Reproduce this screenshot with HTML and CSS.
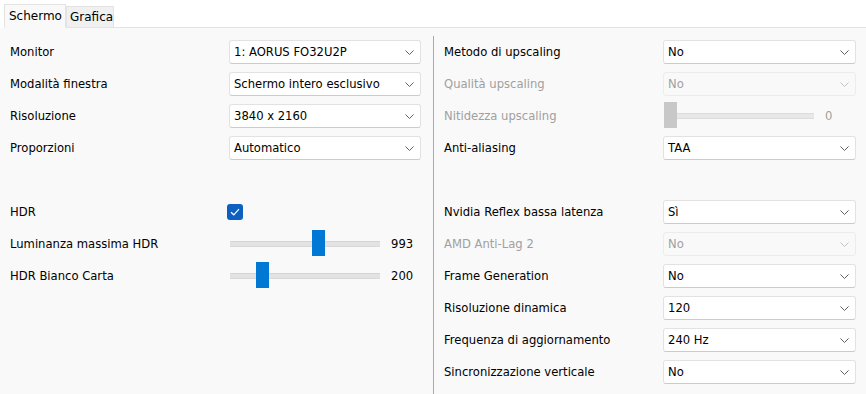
FILE: index.html
```html
<!DOCTYPE html>
<html lang="it">
<head>
<meta charset="utf-8">
<title>Impostazioni</title>
<link rel="stylesheet" href="styles.css">
</head>
<body>
<div class="tabbar">
  <div class="tab active">Schermo</div>
  <div class="tab">Grafica</div>
  <div class="tabfill"></div>
</div>
<div class="panel">
  <div class="col left">
    <div class="lbl">Monitor</div>
    <div class="combo"><span>1: AORUS FO32U2P</span><svg class="chev" width="9" height="5" viewBox="0 0 9 5"><polyline points="0.5,0.5 4.5,4.5 8.5,0.5"/></svg></div>
    <div class="lbl">Modalità finestra</div>
    <div class="combo"><span>Schermo intero esclusivo</span><svg class="chev" width="9" height="5" viewBox="0 0 9 5"><polyline points="0.5,0.5 4.5,4.5 8.5,0.5"/></svg></div>
    <div class="lbl">Risoluzione</div>
    <div class="combo"><span>3840 x 2160</span><svg class="chev" width="9" height="5" viewBox="0 0 9 5"><polyline points="0.5,0.5 4.5,4.5 8.5,0.5"/></svg></div>
    <div class="lbl">Proporzioni</div>
    <div class="combo"><span>Automatico</span><svg class="chev" width="9" height="5" viewBox="0 0 9 5"><polyline points="0.5,0.5 4.5,4.5 8.5,0.5"/></svg></div>
    <div class="spacer"></div>
    <div class="lbl">HDR</div>
    <div class="cell"><div class="check"><svg width="10" height="8" viewBox="0 0 10 8"><polyline points="1,4.2 3.8,6.8 9,1.2"/></svg></div></div>
    <div class="lbl">Luminanza massima HDR</div>
    <div class="cell slider-row"><div class="track"><div class="handle" style="left:82px"></div></div><span class="val">993</span></div>
    <div class="lbl">HDR Bianco Carta</div>
    <div class="cell slider-row"><div class="track"><div class="handle" style="left:26px"></div></div><span class="val">200</span></div>
  </div>
  <div class="sep"></div>
  <div class="col right">
    <div class="lbl">Metodo di upscaling</div>
    <div class="combo"><span>No</span><svg class="chev" width="9" height="5" viewBox="0 0 9 5"><polyline points="0.5,0.5 4.5,4.5 8.5,0.5"/></svg></div>
    <div class="lbl dis">Qualità upscaling</div>
    <div class="combo disabled"><span>No</span><svg class="chev" width="9" height="5" viewBox="0 0 9 5"><polyline points="0.5,0.5 4.5,4.5 8.5,0.5"/></svg></div>
    <div class="lbl dis">Nitidezza upscaling</div>
    <div class="cell slider-row wide"><div class="track dis"><div class="handle dis" style="left:0px"></div></div><span class="val dis">0</span></div>
    <div class="lbl">Anti-aliasing</div>
    <div class="combo"><span>TAA</span><svg class="chev" width="9" height="5" viewBox="0 0 9 5"><polyline points="0.5,0.5 4.5,4.5 8.5,0.5"/></svg></div>
    <div class="spacer"></div>
    <div class="lbl">Nvidia Reflex bassa latenza</div>
    <div class="combo"><span>Sì</span><svg class="chev" width="9" height="5" viewBox="0 0 9 5"><polyline points="0.5,0.5 4.5,4.5 8.5,0.5"/></svg></div>
    <div class="lbl dis">AMD Anti-Lag 2</div>
    <div class="combo disabled"><span>No</span><svg class="chev" width="9" height="5" viewBox="0 0 9 5"><polyline points="0.5,0.5 4.5,4.5 8.5,0.5"/></svg></div>
    <div class="lbl">Frame Generation</div>
    <div class="combo"><span>No</span><svg class="chev" width="9" height="5" viewBox="0 0 9 5"><polyline points="0.5,0.5 4.5,4.5 8.5,0.5"/></svg></div>
    <div class="lbl">Risoluzione dinamica</div>
    <div class="combo"><span>120</span><svg class="chev" width="9" height="5" viewBox="0 0 9 5"><polyline points="0.5,0.5 4.5,4.5 8.5,0.5"/></svg></div>
    <div class="lbl">Frequenza di aggiornamento</div>
    <div class="combo"><span>240 Hz</span><svg class="chev" width="9" height="5" viewBox="0 0 9 5"><polyline points="0.5,0.5 4.5,4.5 8.5,0.5"/></svg></div>
    <div class="lbl">Sincronizzazione verticale</div>
    <div class="combo"><span>No</span><svg class="chev" width="9" height="5" viewBox="0 0 9 5"><polyline points="0.5,0.5 4.5,4.5 8.5,0.5"/></svg></div>
  </div>
</div>
</body>
</html>
```
FILE: styles.css
```css
html, body {
  margin: 0;
  padding: 0;
  width: 866px;
  height: 394px;
  overflow: hidden;
  background: #f9f9f9;
  font-family: "DejaVu Sans", Tahoma, sans-serif;
  font-size: 11.6px;
  color: #000;
}

.tabbar {
  display: flex;
  align-items: flex-end;
  height: 28px;
  background: #ffffff;
  padding-left: 4px;
  box-sizing: border-box;
}

.tab {
  height: 22px;
  padding: 0 3px;
  line-height: 21px;
  background: #f0f0f0;
  border: 1px solid #e3e3e3;
  border-bottom: 1px solid #e3e3e3;
  box-sizing: border-box;
  font-size: 12px;
  width: 48px;
}

.tab.active {
  height: 24px;
  background: #f9f9f9;
  border-bottom-color: #f9f9f9;
  line-height: 22px;
  padding: 0 4px;
  width: 62px;
}

.tabfill {
  flex: 1;
  height: 1px;
  background: #e3e3e3;
}

.panel {
  display: flex;
  padding-top: 8px;
  height: 366px;
  box-sizing: border-box;
}

.col {
  display: grid;
  grid-auto-rows: 32px;
  align-items: center;
}

.col.left {
  width: 433px;
  padding-left: 10px;
  box-sizing: border-box;
  grid-template-columns: 219px 192px;
}

.col.right {
  padding-left: 10px;
  grid-template-columns: 219px 193px;
}

.sep {
  width: 1px;
  background: #a9a9a9;
  margin-top: 0;
}

.lbl {
  white-space: nowrap;
}

.lbl.dis {
  color: #a0a0a0;
}

.spacer {
  grid-column: 1 / -1;
}

.combo {
  height: 24px;
  background: #ffffff;
  border: 1px solid #e2e2e2;
  border-bottom-color: #cbcbcb;
  border-radius: 3px;
  box-sizing: border-box;
  display: flex;
  align-items: center;
  justify-content: space-between;
  padding: 0 6px 0 4px;
  white-space: nowrap;
}

.combo.disabled {
  background: #f9f9f9;
  border-color: #ececec;
  color: #a0a0a0;
}

.chev polyline {
  fill: none;
  stroke: #5f5f5f;
  stroke-width: 1;
}

.combo.disabled .chev polyline {
  stroke: #c2c2c2;
}

.cell {
  display: flex;
  align-items: center;
  height: 32px;
}

.check {
  width: 16px;
  height: 16px;
  margin-left: -2px;
  border-radius: 3px;
  background: #0d5fc0;
  display: flex;
  align-items: center;
  justify-content: center;
}

.check polyline {
  fill: none;
  stroke: #ffffff;
  stroke-width: 1.2;
}

.slider-row {
  gap: 11px;
  padding-left: 1px;
}

.track {
  position: relative;
  width: 150px;
  height: 4px;
  background: #e3e3e3;
  border-top: 1px solid #d4d4d4;
  border-bottom: 1px solid #d9d9d9;
  box-sizing: content-box;
}

.handle {
  position: absolute;
  top: -12px;
  width: 13px;
  height: 26px;
  background: #0078d4;
}

.handle.dis {
  background: #c8c8c8;
}

.track.dis {
  background: #e8e8e8;
  border-color: #dcdcdc;
}

.val.dis {
  color: #a0a0a0;
}
```
